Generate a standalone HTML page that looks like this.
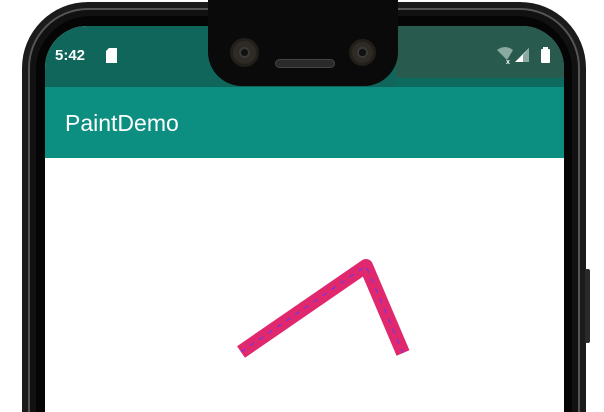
<!DOCTYPE html>
<html><head><style>
*{margin:0;padding:0;box-sizing:border-box}
html,body{width:604px;height:412px;overflow:hidden}
body{background:#fff;position:relative;font-family:"Liberation Sans",Roboto,sans-serif}
.frame{position:absolute;left:22px;top:2px;width:564px;height:410px;background:#1b1b1b;border-radius:66px 66px 0 0}
.frame2{position:absolute;left:28px;top:8px;width:552px;height:404px;border:2px solid #555;border-bottom:none;border-radius:60px 60px 0 0;background:#111}
.frame3{position:absolute;left:36px;top:16px;width:536px;height:396px;background:#050505;border-radius:54px 54px 0 0}
.btn{position:absolute;left:585px;top:269px;width:5px;height:74px;background:#2a2a2a;border-radius:0 2px 2px 0}
.screen{position:absolute;left:45px;top:26px;width:519px;height:386px;background:#fff;border-radius:42px 42px 0 0;overflow:hidden}
.sb{position:absolute;left:0;top:0;width:519px;height:62px;background:#10665a}
.sbr{position:absolute;left:351px;top:0;width:168px;height:52px;background:#285a4e}
.sbr2{position:absolute;left:351px;top:52px;width:168px;height:10px;background:#0c6b5e}
.tb{position:absolute;left:0;top:61px;width:519px;height:71px;background:#0c8f80}
.title{position:absolute;left:20px;top:84px;color:#fff;font-size:23px}
.time{position:absolute;left:10px;top:21px;color:#fff;font-size:15px;font-weight:bold}
.notch{position:absolute;left:208px;top:0;width:190px;height:86px;background:#0a0a0a;border-radius:0 0 34px 34px}
.cam{position:absolute;border-radius:50%;background:#2e2a24;border:3px solid #221f1a}
.cam::after{content:"";position:absolute;left:35%;top:35%;width:30%;height:30%;border-radius:50%;background:#111;box-shadow:0 0 0 2px #3a3a3a}
.spk{position:absolute;left:275px;top:59px;width:60px;height:9px;border-radius:5px;background:#2a2a2a;border:1px solid #444}
</style></head><body>
<div class="frame"></div><div class="frame2"></div><div class="frame3"></div><div class="btn"></div>
<div class="screen">
<div class="sb"></div><div class="sbr"></div><div class="sbr2"></div>
<div class="tb"></div>
<div class="time">5:42</div>
<svg style="position:absolute;left:61px;top:22px" width="12" height="15"><path d="M3 0H11V15H0V3Z" fill="#fff"/></svg>
<svg style="position:absolute;left:452px;top:20px" width="60" height="20">
<path d="M0 4 Q8 -2 16 4 L10 14Z" fill="#8aa9a0"/>
<text x="9" y="18" font-size="7" fill="#fff" font-weight="bold">x</text>
<path d="M18 16L32 2V16Z" fill="#fff"/><path d="M26 9L32 2V16H26Z" fill="#8aa9a0"/>
<rect x="44" y="3" width="9" height="14" rx="1" fill="#fff"/><rect x="46" y="1" width="5" height="3" fill="#fff"/>
</svg>
<div class="title">PaintDemo</div>
</div>
<div class="notch"></div>
<div class="cam" style="left:230px;top:38px;width:29px;height:29px"></div>
<div class="cam" style="left:349px;top:39px;width:27px;height:27px"></div>
<div class="spk"></div>
<svg style="position:absolute;left:0;top:0" width="604" height="412">
<path d="M241 352 L366 266 L403 353" fill="none" stroke="#e0286e" stroke-width="14" stroke-linejoin="round"/>
<path d="M241 352 L366 266 L403 353" fill="none" stroke="#5a3cff" stroke-width="1" stroke-dasharray="5 6" stroke-linejoin="round"/>
</svg>
</body></html>
